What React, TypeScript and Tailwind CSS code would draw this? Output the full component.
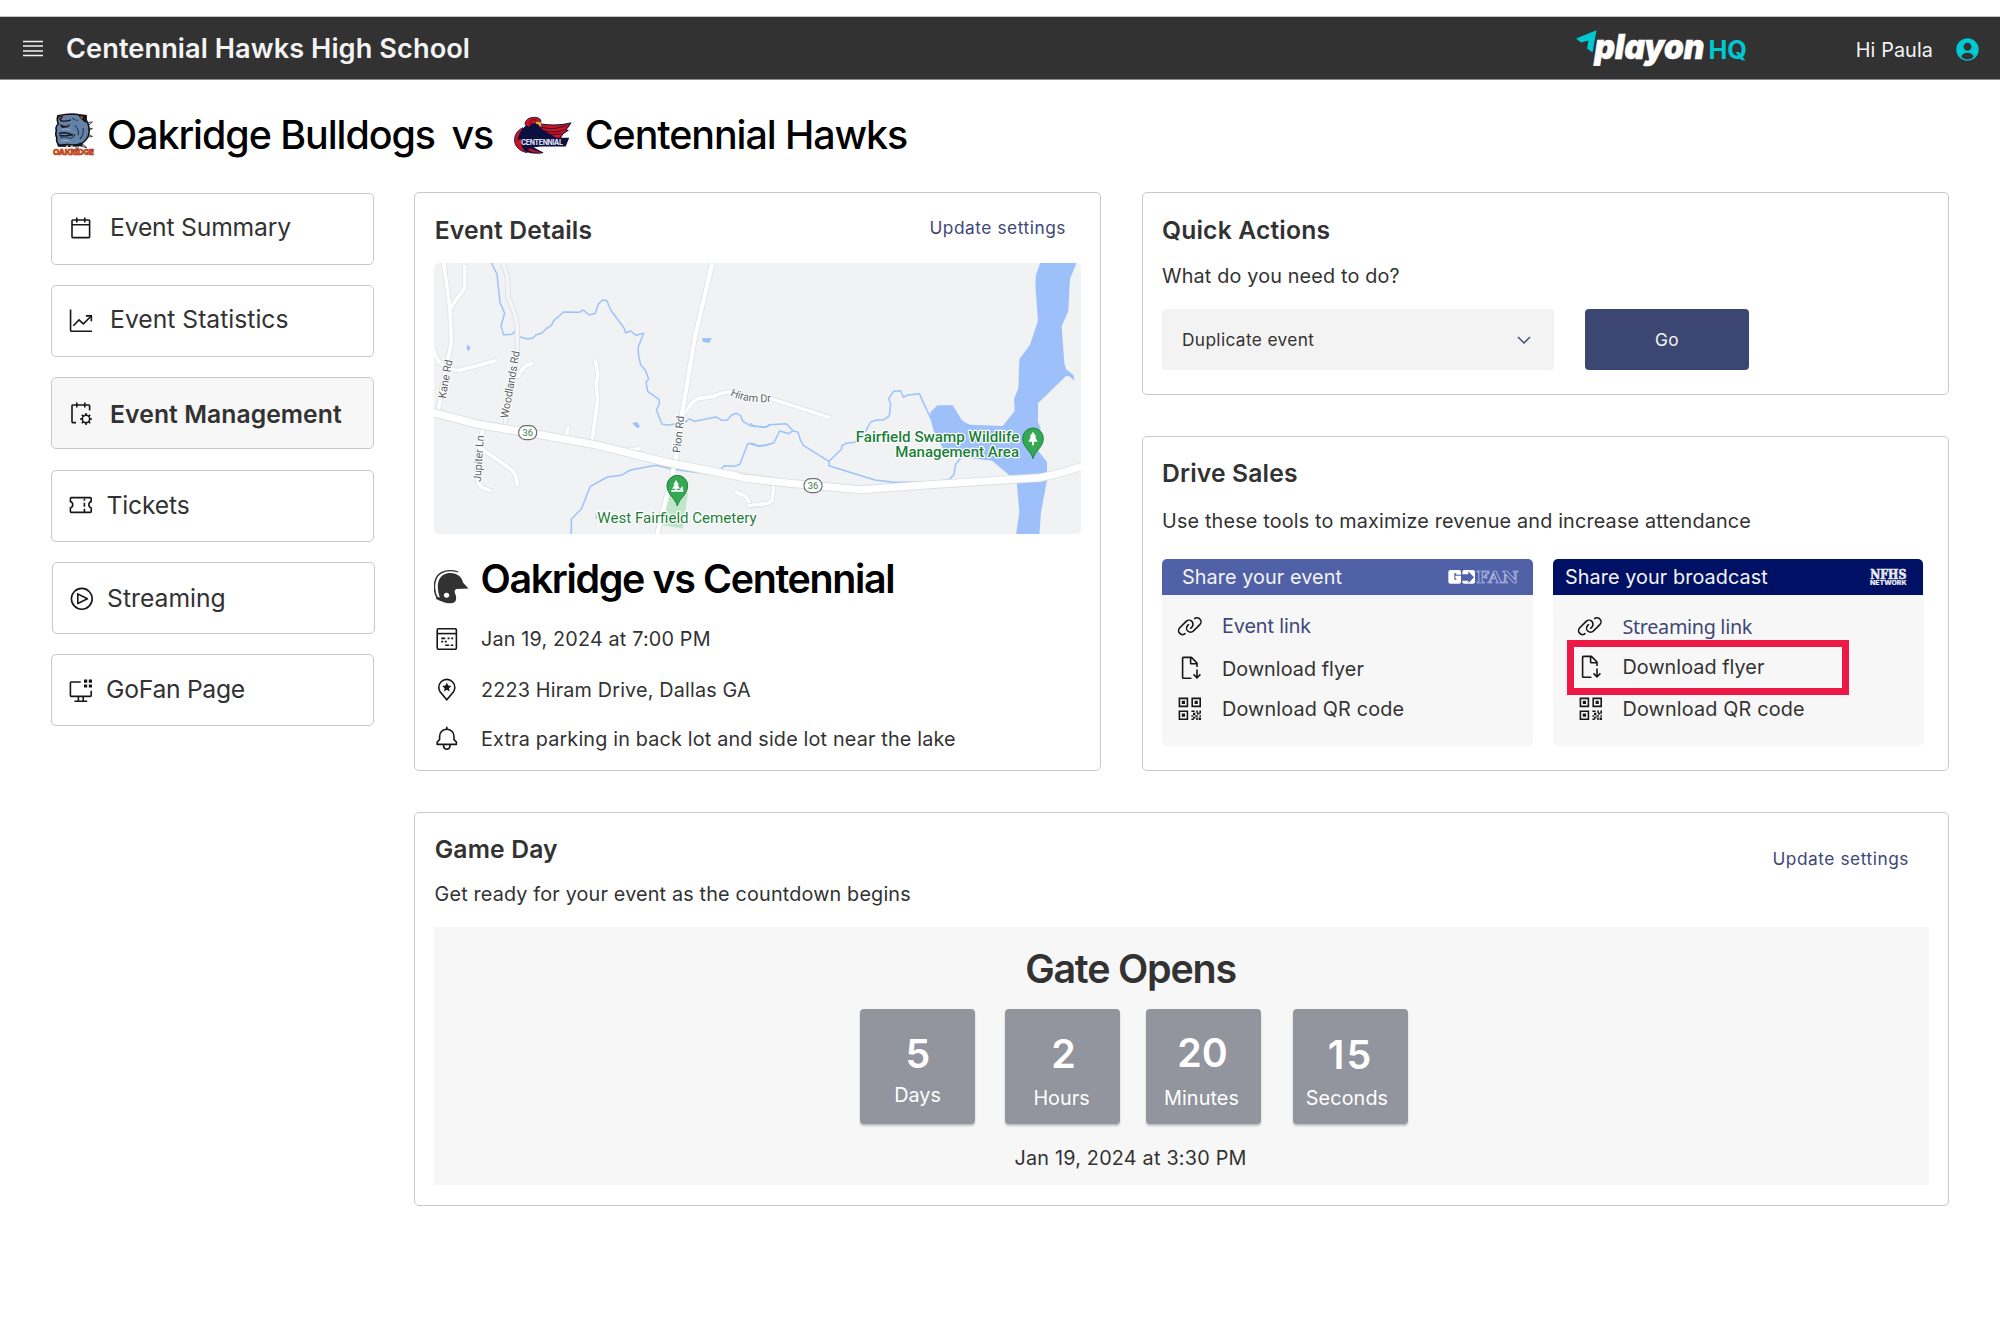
import React from "react";
import type { ReactNode } from "react";

const BODY = "text-[19.8px] leading-[28px] tracking-[0.17px]";
const HEADING = "text-[24.7px] leading-[32px] font-semibold tracking-[0.15px]";
const LINK = "text-[17.3px] leading-6 tracking-[0.55px] text-[#3d4777]";
const CARD = "rounded-[5px] border border-[#c9c9c9] bg-white";

/* ---------- icons ---------- */

function Icon({ children, className }: { children: ReactNode; className?: string }) {
  return (
    <svg viewBox="0 0 32 32" fill="#161616" className={`block size-[25.6px] shrink-0 ${className ?? ""}`}>
      {children}
    </svg>
  );
}

const CalendarIcon = () => (
  <Icon>
    <path d="M26,4h-4V2h-2v2h-8V2h-2v2H6C4.9,4,4,4.9,4,6v20c0,1.1,0.9,2,2,2h20c1.1,0,2-0.9,2-2V6C28,4.9,27.1,4,26,4z M26,26H6V12h20V26z M26,10H6V6h4v2h2V6h8v2h2V6h4V10z" />
  </Icon>
);

const ChartIcon = () => (
  <Icon>
    <g fill="none" stroke="#161616" strokeWidth="2">
      <path d="M3.2 2V28a1 1 0 0 0 1 1H30" />
      <path d="M6.6 22.2L13.8 14.8L19.2 19.8L29 10" />
      <path d="M22.4 9.8H29.2V16.6" />
    </g>
  </Icon>
);

const CalendarSettingsIcon = () => (
  <Icon>
    <path d="M10 28H6a2 2 0 0 1-2-2V6a2 2 0 0 1 2-2h4V2h2v2h8V2h2v2h4a2 2 0 0 1 2 2v6h-2V6h-4v2h-2V6h-8v2h-2V6H6v20h4z" />
    <g fill="none" stroke="#161616" strokeWidth="2">
      <circle cx="22.5" cy="22.5" r="4.6" />
      <path d="M22.5 15v3M22.5 27v3M15 22.5h3M27 22.5h3M17.2 17.2l2.1 2.1M25.7 25.7l2.1 2.1M27.8 17.2l-2.1 2.1M19.3 25.7l-2.1 2.1" />
    </g>
  </Icon>
);

const TicketIcon = () => (
  <Icon>
    <g fill="none" stroke="#161616" strokeWidth="2">
      <path d="M4 7H28a1 1 0 0 1 1 1V12a4.2 4.2 0 0 0 0 8V24.5a1 1 0 0 1-1 1H4a1 1 0 0 1-1-1V20a4.2 4.2 0 0 0 0-8V8a1 1 0 0 1 1-1z" />
      <path d="M20.5 8V11M20.5 13.5V18.5M20.5 21V25" />
    </g>
  </Icon>
);

const PlayIcon = () => (
  <Icon>
    <path d="M11,23a1,1,0,0,1-1-1V10a1,1,0,0,1,1.4473-.8945l12,6a1,1,0,0,1,0,1.789l-12,6A1.001,1.001,0,0,1,11,23Zm1-11.3821v8.7642L20.7642,16Z" />
    <path d="M16,4A12,12,0,1,1,4,16,12,12,0,0,1,16,4m0-2A14,14,0,1,0,30,16,14,14,0,0,0,16,2Z" />
  </Icon>
);

const ScreenIcon = () => (
  <Icon>
    <path d="M20 2h4v4h-4zM26 2h4v4h-4zM20 8h4v4h-4zM26 8h4v4h-4z" />
    <path d="M28 16v6H4V6h12V4H4a2 2 0 0 0-2 2v16a2 2 0 0 0 2 2h8v4H8v2h16v-2h-4v-4h8a2 2 0 0 0 2-2v-6zM18 28h-4v-4h4z" />
  </Icon>
);

const EventIcon = () => (
  <Icon>
    <g fill="none" stroke="#161616" strokeWidth="2">
      <rect x="4" y="3.5" width="24" height="25.5" rx="1.5" />
      <path d="M4 9.5H28" />
      <path d="M9 15.5h5M17 15.5h2.5M21.5 15.5h2.5M9 19.5h2.5M13.5 19.5h2.5M14 24h5M21 24h3" />
    </g>
  </Icon>
);

const LocationStarIcon = () => (
  <Icon>
    <path d="M16,30,7.5645,20.0513c-.0479-.0571-.3482-.4515-.3482-.4515A10.8888,10.8888,0,0,1,5,13a11,11,0,0,1,22,0,10.8844,10.8844,0,0,1-2.2148,6.5973l-.0015.0025s-.3.3944-.3447.4474ZM8.8125,18.395c.001.0007.2334.3082.2866.3744L16,26.9079l6.91-8.15c.0439-.0552.2783-.3649.2788-.3657A8.901,8.901,0,0,0,25,13,9,9,0,1,0,7,13a8.9054,8.9054,0,0,0,1.8125,5.395Z" />
    <path d="M16 7l1.7 3.7 4 .5-2.9 2.8.7 4-3.5-2-3.5 2 .7-4L10.3 11.2l4-.5z" />
  </Icon>
);

const BellIcon = () => (
  <Icon>
    <path d="M28.7071,19.293,26,16.5859V13a10.0136,10.0136,0,0,0-9-9.9492V1H15V3.0508A10.0136,10.0136,0,0,0,6,13v3.5859L3.2929,19.293A1,1,0,0,0,3,20v3a1,1,0,0,0,1,1h7v.7768a5.152,5.152,0,0,0,4.5,5.1987A5.0057,5.0057,0,0,0,21,25V24h7a1,1,0,0,0,1-1V20A1,1,0,0,0,28.7071,19.293ZM19,25a3,3,0,0,1-6,0V24h6Zm8-3H5V20.4141L7.707,17.707A1,1,0,0,0,8,17V13a8,8,0,0,1,16,0v4a1,1,0,0,0,.293.707L27,20.4141Z" />
  </Icon>
);

const LinkIcon = () => (
  <Icon>
    <path d="M29.25,6.76a6,6,0,0,0-8.5,0l1.42,1.42a4,4,0,1,1,5.67,5.67l-8,8a4,4,0,1,1-5.67-5.66l1.41-1.42-1.41-1.42-1.42,1.42a6,6,0,0,0,0,8.5A6,6,0,0,0,17,25a6,6,0,0,0,4.27-1.76l8-8A6,6,0,0,0,29.25,6.76Z" />
    <path d="M4.19,24.82a4,4,0,0,1,0-5.67l8-8a4,4,0,0,1,5.67,0A3.94,3.94,0,0,1,19,14a4,4,0,0,1-1.17,2.85L15.71,19l1.42,1.42,2.12-2.12a6,6,0,0,0-8.51-8.51l-8,8a6,6,0,0,0,0,8.51A6,6,0,0,0,7,28a6.07,6.07,0,0,0,4.28-1.76L9.86,24.82A4,4,0,0,1,4.19,24.82Z" />
  </Icon>
);

const DownloadIcon = () => (
  <Icon>
    <path d="M30 25l-1.41-1.41L26 26.17V18H24v8.17l-2.59-2.58L20 25l5 5z" />
    <path d="M18 28H8V4h8v6a2 2 0 0 0 2 2h6v3h2V10a.909.909 0 0 0-.3-.7l-7-7A.909.909 0 0 0 18 2H8A2 2 0 0 0 6 4V28a2 2 0 0 0 2 2H18zM18 4.4L23.6 10H18z" />
  </Icon>
);

const QrIcon = () => (
  <Icon className="ml-[0.7px]">
    <path
      fillRule="evenodd"
      d="M2 2h12v12H2zM4 4v8h8V4zM18 2h12v12H18zM20 4v8h8V4zM2 18h12v12H2zM4 20v8h8v-8zM6 6h4v4H6zM22 6h4v4h-4zM6 22h4v4H6z"
    />
    <path d="M18 18h4v2h-4zM24 18h2v3h-2zM28 18h2v4h-2zM20 21h3v3h-3zM25 21h3v2h-3zM18 24h2v2h-2zM23 24h3v2h-3zM28 24h2v2h-2zM20 26h3v2h-3zM18 28h3v2h-3zM24 27h2v3h-2zM27 27h3v3h-3z" />
  </Icon>
);

/* ---------- logos ---------- */

const BulldogLogo = () => (
  <svg viewBox="139 342 108 127" preserveAspectRatio="none" className="block h-[42px] w-[41px] shrink-0 overflow-visible">
    <path d="M226 368l17-2-12 12zM230 384l13 2-11 7zM230 402l13 8-15 2zM214 430l14 14-20-6zM197 432l5 22 6-20z" fill="#d8dde2" stroke="#111" strokeWidth="2" />
    <path
      d="M152 347L168 344Q190 340 208 344L226 347L226 360Q235 374 234 398Q232 418 216 430Q196 440 178 434L156 436Q146 428 149 414Q144 404 148 392Q144 382 153 372Q148 358 152 347Z"
      fill="#6583a9"
      stroke="#0c0c10"
      strokeWidth="4"
    />
    <path d="M150 347l16 2-8 14zM204 344l24 3-3 22-12-12z" fill="#15151a" />
    <path d="M210 349l9 1-4 7zM154 349l7 3-4 5zM170 345l8 1-2 5z" fill="#e8501e" />
    <path d="M156 373l14 5 15-5-6 9-16 2z" fill="#15151a" />
    <path d="M158 361q12 6 28-1M154 401q16-6 36 4-16 5-34 2" fill="none" stroke="#15151a" strokeWidth="4" />
    <path d="M172 378l9-2-4 4z" fill="#e8501e" />
    <path d="M158 414q14-6 26 2 8-2 14-12M196 376q12 12 10 30M190 354q6 8 14 8M218 384q4 18-8 34" fill="none" stroke="#27364d" strokeWidth="3" />
    <path d="M162 390q10-5 22 1M160 424q14-4 24 0" fill="none" stroke="#9db4d2" strokeWidth="3" />
    <path d="M150 432q14 4 28 0 20 6 36-4l4 10-34 4-32-1z" fill="#15151a" />
    <path d="M172 437l4 10 4-10zM184 437l4 10 4-10z" fill="#cfd5db" />
    <text x="139" y="466.5" textLength="107" lengthAdjust="spacingAndGlyphs" fill="#f0541e" stroke="#7c2408" strokeWidth="1.2" className="font-['Inter'] text-[24px] font-black">
      OAKRIDGE
    </text>
  </svg>
);

const HawkLogo = () => (
  <svg viewBox="321 80 160 110" preserveAspectRatio="none" className="block h-[37px] w-[57px] shrink-0 overflow-visible">
    <path d="M396 101c30 5 58 4 84-3-4 8-8 14-14 20l6 2-14 10-8 14-64-2-10-22z" fill="#d3121f" stroke="#10133f" strokeWidth="3" />
    <path d="M398 110c24 8 48 4 70-5M398 119c20 8 42 7 64-1M400 128c18 6 36 5 54 1" fill="none" stroke="#10133f" strokeWidth="2.5" />
    <path d="M346 112c-34 16-32 66 12 74-20-22-20-44 0-58z" fill="#d3121f" stroke="#10133f" strokeWidth="2.5" />
    <path d="M346 114Q352 104 364 98L388 98L400 116L420 130L440 142H476L466 168H398L376 170L404 186C380 192 352 188 336 170C326 150 334 128 346 114Z" fill="#0b1040" />
    <path d="M331 150c0 18 10 30 26 35-14-10-18-24-16-40z" fill="#d3121f" />
    <path d="M368 172c12 10 24 8 34 14-16 3-34 1-44-10z" fill="#d3121f" stroke="#0b1040" strokeWidth="2" />
    <path d="M352 102c0-14 12-21 26-21 12 0 18 5 19 12l-10 4-8 4-8-2-8 12z" fill="#d3121f" stroke="#0b1040" strokeWidth="2.5" />
    <path d="M362 100l8-10M372 88l12 1" stroke="#0b1040" strokeWidth="2" />
    <path d="M382 93c12-2 18 4 17 13l-6 5-3-8-8-2z" fill="#f3b229" stroke="#0b1040" strokeWidth="1.5" />
    <text x="341" y="163" textLength="116" lengthAdjust="spacingAndGlyphs" fill="#d9dbea" className="font-['Inter'] text-[21px] font-extrabold">
      CENTENNIAL
    </text>
  </svg>
);

const PlayOnLogo = () => (
  <svg viewBox="1575 20 180 57" className="block h-[57px] w-[180px]">
    <path d="M1577 38.5L1597.5 30.3L1593.5 52.5L1588 48.5L1589.5 40.5L1582 42.5Z" fill="#00c8d2" />
    <text x="1595.5" y="58.8" textLength="110" lengthAdjust="spacingAndGlyphs" fill="#fff" stroke="#fff" strokeWidth=".6" className="font-['Inter'] text-[34px] font-black italic [font-feature-settings:'cv11']">
      playon
    </text>
    <text x="1709.5" y="58.8" textLength="38.5" lengthAdjust="spacingAndGlyphs" fill="#00c8d2" className="font-['Inter'] text-[25px] font-bold">
      HQ
    </text>
  </svg>
);

const GoFanLogo = () => (
  <svg viewBox="952 405 222 78" className="block h-[26px] w-[74px]">
    <path fillRule="evenodd" d="M959 423h26q6 0 6 6v8h-14v-4h-6v19h6v-4h-3v-8h17v18q0 6-6 6h-26q-6 0-6-6v-29q0-6 6-6z" fill="#fff" />
    <path d="M1001 423h26q6 0 6 6v29q0 6-6 6h-26q-6 0-6-6v-3h18v8l17-18-17-18v9h-18v-7q0-6 6-6z" fill="#fff" />
    <text x="1037" y="462" textLength="126" lengthAdjust="spacingAndGlyphs" fill="none" stroke="#c3cbec" strokeWidth="2" className="font-['DejaVu_Serif'] text-[51px] font-bold">
      FAN
    </text>
  </svg>
);

const NfhsLogo = () => (
  <svg viewBox="-6 -18 123 87" className="block h-[29px] w-[41px]">
    <text x="1" y="29" textLength="108" lengthAdjust="spacingAndGlyphs" fill="#e9e9ef" stroke="#e9e9ef" strokeWidth="2" className="font-['DejaVu_Serif'] text-[36px] font-bold">
      NFHS
    </text>
    <text x="0" y="48.5" textLength="110" lengthAdjust="spacingAndGlyphs" fill="#e9e9ef" className="font-['Inter'] text-[17px] font-black">
      NETWORK
    </text>
  </svg>
);

const HelmetIcon = () => (
  <svg viewBox="54 92 77 100" preserveAspectRatio="none" className="block h-[33.5px] w-[34.5px] shrink-0">
    <path d="M62 177C50 150 52 105 78 96q14-5 30 2" fill="none" stroke="#323232" strokeWidth="3.5" />
    <path
      fillRule="evenodd"
      d="M67 174C58 140 62 108 84 102C104 98 116 112 119 130L131 147L104 149Q98 152 101 162Q106 176 101 187Q94 195 78 189Q66 184 58 178L60 172ZM82 160a6 7.5 0 1 0 .1 0z"
      fill="#323232"
    />
  </svg>
);

/* ---------- map ---------- */

const LEFT_ROADS = [
  "M100 240L112 330L120 390L124 490L108 560L85 690",
  "M120 386L164 324V258",
  "M72 512Q80 560 135 570L150 571L256 542",
  "M325 590Q335 556 366 551",
  "M556 542L564 585L558 610L563 660L545 788",
  "M474 742L469 772",
  "M652 808L680 808L688 805",
  "M220 742L205 800L200 880Q204 915 215 922L240 932",
  "M215 806L305 870Q318 880 322 914",
  "M820 706Q845 665 862 656L910 650Q930 638 960 636",
  "M978 936L1008 950L1022 977Q1070 976 1082 968",
];

const RoadLines = ({ paths, width }: { paths: string[]; width: number }) => (
  <g fill="none" strokeLinecap="round" strokeLinejoin="round">
    {paths.map((d) => (
      <path key={`${d}e`} d={d} stroke="#dcdee1" strokeWidth={width + 4} />
    ))}
    {paths.map((d) => (
      <path key={d} d={d} stroke="#fff" strokeWidth={width} />
    ))}
  </g>
);

const Shield = ({ x, y }: { x: number; y: number }) => (
  <g>
    <rect x={x - 27} y={y - 21} width="54" height="42" rx="20" fill="#fff" stroke="#6b7075" strokeWidth="3.5" />
    <text x={x} y={y + 10} textAnchor="middle" fill="#3c7a4c" className="font-['Roboto'] text-[28px]">
      36
    </text>
  </g>
);

const Pin = ({ x, y, children }: { x: number; y: number; children: ReactNode }) => (
  <g transform={`translate(${x} ${y})`}>
    <path d="M0 60C-6 36-31 26-31-1A31 31 0 0 1 31-1C31 26 6 36 0 60Z" fill="#34a853" stroke="#1e7e3a" strokeWidth="3" />
    {children}
  </g>
);

const EventMap = () => (
  <svg viewBox="434 263 647 271" className="block h-[271px] w-[647px] rounded-[5px] bg-[#f0f2f4]">
    <g transform="translate(410 180) scale(.33333)">
      <path d="M876 475L905 474L898 489L878 485ZM666 729L682 726L690 740L682 745ZM170 494L182 501L178 510L171 512ZM556 998L562 1015L558 1018Z" fill="#9dc0fa" />
      <path d="M768 940L834 940L818 1046L752 1034Z" fill="#bfe6ca" />
      <g fill="none" stroke="#9dc3fb" strokeWidth="4.5" strokeLinejoin="round">
        <path d="M242 245L261 282L270 368L284 400L273 437L281 464L305 463L318 452L330 471L353 477L368 475L378 465L396 459L411 444L424 437L431 422L461 396L508 397L519 390L538 405L556 400L565 373L578 360L591 362L602 390L642 444L647 458L662 453L678 466L701 460L685 500V522L692 555L706 570L716 598L708 606L713 634L747 658L748 672L739 690L756 732L775 736L830 724L838 716L854 724L918 711L936 721L952 720L965 705L979 700L991 706L999 724L1020 737L1065 742L1080 736" />
        <path d="M484 1065V1017L514 987L541 919L592 891L634 886L661 870L738 856L790 868L900 883L935 865L944 857L975 859L990 852L1013 791L1027 790L1046 798L1080 793" />
      </g>
      <RoadLines paths={LEFT_ROADS} width={11} />
      <path d="M278 245L292 290L294 350L312 395L322 440V510L284 740" fill="none" stroke="#dcdee1" strokeWidth="16" />
      <path d="M278 245L292 290L294 350L312 395L322 440V510L284 740" fill="none" stroke="#f4f5f6" strokeWidth="11" />
      <RoadLines paths={["M909 240L855 470L818 690L796 845L740 1070"]} width={13} />
      <path d="M60 695L200 732L400 766L560 795L760 845L1000 892L1090 905" fill="none" stroke="#dcdee1" strokeWidth="27" />
      <path d="M60 695L200 732L400 766L560 795L760 845L1000 892L1090 905" fill="none" stroke="#fff" strokeWidth="22" />
    </g>
    <g transform="translate(750 180) scale(.33333)">
      <path
        d="M872 245L858 285L856 315L864 422L840 494L808 538L805 625L792 657L794 694L758 738L660 734Q642 728 634 718L608 676H562L541 697V712L550 750L580 808L640 832L726 842L778 886L800 905L808 995L798 1065H868L873 997L891 900V846L864 812L872 744L864 728V670L948 588L958 589L973 602L971 586L948 567L943 550L935 438L955 393L960 296L981 245Z"
        fill="#9dc0fa"
      />
      <g fill="none" stroke="#9dc3fb" strokeWidth="4.5" strokeLinejoin="round">
        <path d="M0 730L10 737L46 742L58 734L109 731L129 752L144 757L152 782L160 796L237 844L275 807V798L288 790L315 787L348 752L362 726L380 720H400L418 708L422 672L416 656L431 634L452 632L460 652L470 646L508 641L548 728" />
        <path d="M0 791L25 798L42 797L72 788L89 753L116 761L129 752M237 844V857L375 900L430 907L530 907L597 899L612 884L617 853L634 832" />
      </g>
      <RoadLines paths={["M60 655L237 712", "M-3 977L50 970Q66 967 68 954L71 915"]} width={10} />
      <path d="M-30 893L120 910L330 929L560 913L870 893Q920 884 1000 858" fill="none" stroke="#dcdee1" strokeWidth="26" />
      <path d="M-30 893L120 910L330 929L560 913L870 893Q920 884 1000 858" fill="none" stroke="#fff" strokeWidth="21" />
      <Shield x={189} y={917} />
      <g fill="#1b8039" stroke="#fff" strokeWidth="7" paintOrder="stroke" strokeLinejoin="round" className="font-['Roboto'] text-[44px] font-medium">
        <text x="317" y="787" textLength="491" lengthAdjust="spacingAndGlyphs">Fairfield Swamp Wildlife</text>
        <text x="436" y="832" textLength="371" lengthAdjust="spacingAndGlyphs">Management Area</text>
      </g>
      <Pin x={849} y={776}>
        <path d="M0-21L10-6H6L14 9H3V20H-3V9H-14L-6-6H-10Z" fill="#fff" />
      </Pin>
    </g>
    <g transform="translate(410 180) scale(.33333)">
      <Shield x={353} y={758} />
      <g fill="#5a5f66" stroke="#fff" strokeWidth="6" paintOrder="stroke" strokeLinejoin="round" className="font-['Roboto'] text-[33px]">
        <text transform="translate(107 657) rotate(-80)" textLength="118">Kane Rd</text>
        <text transform="translate(294 716) rotate(-80)" textLength="204">Woodlands Rd</text>
        <text transform="translate(212 906) rotate(-86)" textLength="140">Jupiter Ln</text>
        <text transform="translate(811 820) rotate(-84)" textLength="112">Pion Rd</text>
        <path id="hiram" d="M960 646Q1010 672 1094 665" fill="none" stroke="none" />
        <text>
          <textPath href="#hiram" textLength="126">Hiram Dr</textPath>
        </text>
      </g>
      <Pin x={802} y={918}>
        <path d="M-4-18L5-4H1L8 8H-2V12H18V17H-18V12H-7V8H-16L-8-4H-12ZM12 2h5v10h-8V6h3z" fill="#fff" />
      </Pin>
      <text x="562" y="1028" textLength="478" lengthAdjust="spacingAndGlyphs" fill="#1b8039" stroke="#fff" strokeWidth="7" paintOrder="stroke" strokeLinejoin="round" className="font-['Roboto'] text-[45px]">
        West Fairfield Cemetery
      </text>
    </g>
  </svg>
);

/* ---------- sections ---------- */

const NAV = [
  { label: "Event Summary", icon: <CalendarIcon />, box: "", iconPad: "pt-[22px]", text: "pl-[16.5px] pt-[17px] tracking-[-0.2px]" },
  { label: "Event Statistics", icon: <ChartIcon />, box: "", iconPad: "pt-[22px]", text: "pl-[16.5px] pt-[17px]" },
  { label: "Event Management", icon: <CalendarSettingsIcon />, box: "bg-[#f7f7f7]", iconPad: "pt-[23px]", text: "pl-[16.5px] pt-[20px] font-semibold tracking-[0.07px]" },
  { label: "Tickets", icon: <TicketIcon />, box: "", iconPad: "pt-[21px]", text: "pl-[13px] pt-[18px] tracking-[-0.2px]" },
  { label: "Streaming", icon: <PlayIcon />, box: "ml-px -mr-px", iconPad: "pt-[23px]", text: "pl-[12.5px] pt-[19.5px]" },
  { label: "GoFan Page", icon: <ScreenIcon />, box: "", iconPad: "pt-[23px]", text: "pl-[12.5px] pt-[18px] tracking-[-0.3px]" },
];

const Sidebar = () => (
  <nav className="flex w-[323px] shrink-0 flex-col gap-[20.2px] pt-px">
    {NAV.map((n) => (
      <a key={n.label} className={`flex h-[72px] rounded-[5px] border border-[#c9c9c9] pl-4 ${n.box}`}>
        <span className={n.iconPad}>{n.icon}</span>
        <span className={`text-[24.7px] leading-[32px] ${n.text}`}>{n.label}</span>
      </a>
    ))}
  </nav>
);

const InfoRow = ({ icon, className, children }: { icon: ReactNode; className: string; children: ReactNode }) => (
  <div className={`flex h-7 items-center ${className}`}>
    <span className="w-[47px] shrink-0">{icon}</span>
    <span className={BODY}>{children}</span>
  </div>
);

const EventDetails = () => (
  <section className={`${CARD} h-[579px] w-[687px] shrink-0 pl-[19px] pt-[21px]`}>
    <div className="flex w-[647px] items-start justify-between pl-[0.7px] pr-[15px]">
      <h2 className={HEADING}>Event Details</h2>
      <a className={`${LINK} mt-0.5`}>Update settings</a>
    </div>
    <div className="mt-[17px]">
      <EventMap />
    </div>
    <div className="mt-[21px] flex h-[49px]">
      <span className="w-[46.5px] shrink-0 pt-[15px]">
        <HelmetIcon />
      </span>
      <h3 className="whitespace-nowrap text-[39.4px] font-semibold leading-[48px] tracking-[-1.35px] text-black">Oakridge vs Centennial</h3>
    </div>
    <InfoRow icon={<EventIcon />} className="mt-[21px]">Jan 19, 2024 at 7:00 PM</InfoRow>
    <InfoRow icon={<LocationStarIcon />} className="mt-[22.5px]">2223 Hiram Drive, Dallas GA</InfoRow>
    <InfoRow icon={<BellIcon />} className="mt-[21px]">Extra parking in back lot and side lot near the lake</InfoRow>
  </section>
);

const QuickActions = () => (
  <section className={`${CARD} h-[203px] pl-[19px] pt-[21px]`}>
    <h2 className={HEADING}>Quick Actions</h2>
    <p className={`${BODY} mt-[16px]`}>What do you need to do?</p>
    <div className="mt-[19px] flex h-[61px] gap-[31px]">
      <button className="flex w-[392px] items-center justify-between rounded-[4px] bg-[#f3f3f3] pl-[20px] pr-[23px] text-[17.3px] tracking-[0.36px]">
        Duplicate event
        <svg viewBox="0 0 14 8" className="block h-2 w-[14px]">
          <path d="M1 1L7 7L13 1" fill="none" stroke="#3d4777" strokeWidth="1.4" />
        </svg>
      </button>
      <button className="w-[164px] rounded-[4px] bg-[#3c4673] text-[17.3px] tracking-[0.36px] text-[#f4f4f4]">Go</button>
    </div>
  </section>
);

const ShareRow = ({ icon, className, textClass, children }: { icon: ReactNode; className: string; textClass: string; children: ReactNode }) => (
  <div className={`flex h-7 items-center ${className}`}>
    <span className="w-[45.5px] shrink-0">{icon}</span>
    <span className={`text-[19.8px] leading-[28px] ${textClass}`}>{children}</span>
  </div>
);

const DriveSales = () => (
  <section className={`${CARD} mt-[41px] h-[335px] pl-[19px] pt-[20px]`}>
    <h2 className={HEADING}>Drive Sales</h2>
    <p className={`${BODY} mt-[18px]`}>Use these tools to maximize revenue and increase attendance</p>
    <div className="mt-[24px] flex gap-5">
      <div className="h-[187px] w-[371px] overflow-hidden rounded-[5px] bg-[#f7f7f7]">
        <div className="flex h-9 items-center justify-between bg-[#5161a7] pl-[20px] pr-[11px] text-[#f4f4f4]">
          <span className="text-[19.8px] leading-[28px] tracking-[0.09px]">Share your event</span>
          <GoFanLogo />
        </div>
        <div className="pl-[14.5px] pt-[17px]">
          <ShareRow icon={<LinkIcon />} className="" textClass="tracking-[-0.1px] text-[#3d4777]">Event link</ShareRow>
          <ShareRow icon={<DownloadIcon />} className="mt-[14px]" textClass="pt-px tracking-[0.05px]">Download flyer</ShareRow>
          <ShareRow icon={<QrIcon />} className="mt-[13px]" textClass="tracking-[0.17px]">Download QR code</ShareRow>
        </div>
      </div>
      <div className="relative h-[187px] w-[371px] overflow-hidden rounded-[5px] bg-[#f7f7f7]">
        <div className="mr-px flex h-9 items-center justify-between rounded-tr-[5px] bg-[#001165] pl-[12px] pr-[14px] text-[#f4f4f4]">
          <span className="text-[19.8px] leading-[28px] tracking-[0.09px]">Share your broadcast</span>
          <NfhsLogo />
        </div>
        <div className="pl-[24px] pt-[17px]">
          <ShareRow icon={<LinkIcon />} className="" textClass="pt-px font-['Noto_Sans'] tracking-[-0.33px] text-[#3d4777]">Streaming link</ShareRow>
          <ShareRow icon={<DownloadIcon />} className="mt-[13px]" textClass="tracking-[0.05px]">Download flyer</ShareRow>
          <ShareRow icon={<QrIcon />} className="mt-[14px]" textClass="tracking-[0.17px]">Download QR code</ShareRow>
        </div>
        <div className="absolute left-[14px] top-[81px] h-[55px] w-[282px] border-[7px] border-[#ee1846]" />
      </div>
    </div>
  </section>
);

const TILES = [
  { n: "5", label: "Days", tile: "", num: "pt-[21px] pl-px", lab: "mt-[3px] tracking-[0px]" },
  { n: "2", label: "Hours", tile: "ml-[30px]", num: "pl-[2px] pt-[21px]", lab: "mt-[6px] pr-[2px]" },
  { n: "20", label: "Minutes", tile: "ml-[26px]", num: "pr-[2px] pt-[20px]", lab: "mt-[7px] pr-[4px] tracking-[0.1px]" },
  { n: "15", label: "Seconds", tile: "ml-[32px]", num: "pt-[22px] tracking-[2px]", lab: "mt-[5px] pr-[7px] tracking-[0.1px]" },
];

const GameDay = () => (
  <section className={`${CARD} mt-[41px] h-[394px] pl-[19px] pt-[20px]`}>
    <div className="flex w-[1495px] items-start justify-between pl-[0.7px] pr-[20px]">
      <h2 className={HEADING}>Game Day</h2>
      <a className={`${LINK} mt-[14px]`}>Update settings</a>
    </div>
    <p className={`${BODY} mt-[9px] pl-[0.5px]`}>Get ready for your event as the countdown begins</p>
    <div className="mt-[19px] flex h-[258px] w-[1495px] flex-col items-center bg-[#f7f7f7] pr-[101px] pt-[18px]">
      <h3 className="pr-px text-[39.4px] font-semibold leading-[48px] tracking-[-1.2px]">Gate Opens</h3>
      <div className="mt-[15.5px] flex pl-[6px]">
        {TILES.map((t) => (
          <div key={t.label} className={`h-[115px] w-[115px] rounded-[4px] bg-[#92949e] text-center text-white shadow-[0_2px_2px_rgba(0,0,0,0.22)] ${t.tile}`}>
            <div className={`text-[39.4px] font-semibold leading-[48px] ${t.num}`}>{t.n}</div>
            <div className={`text-[19.8px] leading-[28px] ${t.lab}`}>{t.label}</div>
          </div>
        ))}
      </div>
      <p className="mt-5 pr-px text-[19.8px] leading-[28px] tracking-[0.22px]">Jan 19, 2024 at 3:30 PM</p>
    </div>
  </section>
);

const Header = () => (
  <header className="flex h-16 items-center border-b border-t border-b-[#8a8a8a] border-t-[#c4c4c4] bg-[#323232] pl-[23px] pr-[19px]">
    <svg viewBox="0 0 20 17" className="block h-[17px] w-5">
      <path d="M0 1.5H20M0 6H20M0 11H20M0 15.5H20" stroke="#f4f4f4" strokeWidth="1.5" />
    </svg>
    <h1 className="ml-[23px] mt-0.5 text-[27.2px] font-semibold leading-9 tracking-[0.06px] text-[#f4f4f4]">Centennial Hawks High School</h1>
    <div className="ml-auto flex items-center">
      <div className="pt-px">
        <PlayOnLogo />
      </div>
      <span className="ml-[102px] mt-[4px] text-[19.8px] leading-7 tracking-[0.1px] text-[#f4f4f4]">Hi Paula</span>
      <svg viewBox="0 0 24 24" className="ml-[21px] mt-0.5 block size-[27px]">
        <path
          fill="#00c8d2"
          d="M12 2C6.48 2 2 6.48 2 12s4.48 10 10 10 10-4.48 10-10S17.52 2 12 2zm0 4c1.93 0 3.5 1.57 3.5 3.5S13.93 13 12 13s-3.5-1.57-3.5-3.5S10.07 6 12 6zm0 14.8c-2.5 0-4.3-.9-5.6-2.6.8-2.2 3.2-3.4 5.6-3.4s4.8 1.2 5.6 3.4c-1.3 1.7-3.1 2.6-5.6 2.6z"
        />
      </svg>
    </div>
  </header>
);

export default function App() {
  return (
    <div className="h-[1333px] w-[2000px] overflow-hidden bg-white pt-4 font-['Inter',sans-serif] text-[#323232]">
      <Header />
      <div className="mt-[31px] flex h-12 items-center whitespace-pre pl-[53px] text-[39.4px] font-medium leading-[48px] tracking-[-1.05px] text-black">
        <BulldogLogo />
        <span className="ml-[13px]">Oakridge Bulldogs</span>
        <span className="ml-[16.5px]">vs</span>
        <span className="ml-[21px]">
          <HawkLogo />
        </span>
        <span className="ml-[13.5px] tracking-[-1.07px]">Centennial Hawks</span>
      </div>
      <div className="mt-[33px] flex pl-[51px]">
        <Sidebar />
        <main className="ml-10 w-[1535px]">
          <div className="flex">
            <EventDetails />
            <div className="ml-[41px] flex-1">
              <QuickActions />
              <DriveSales />
            </div>
          </div>
          <GameDay />
        </main>
      </div>
    </div>
  );
}
